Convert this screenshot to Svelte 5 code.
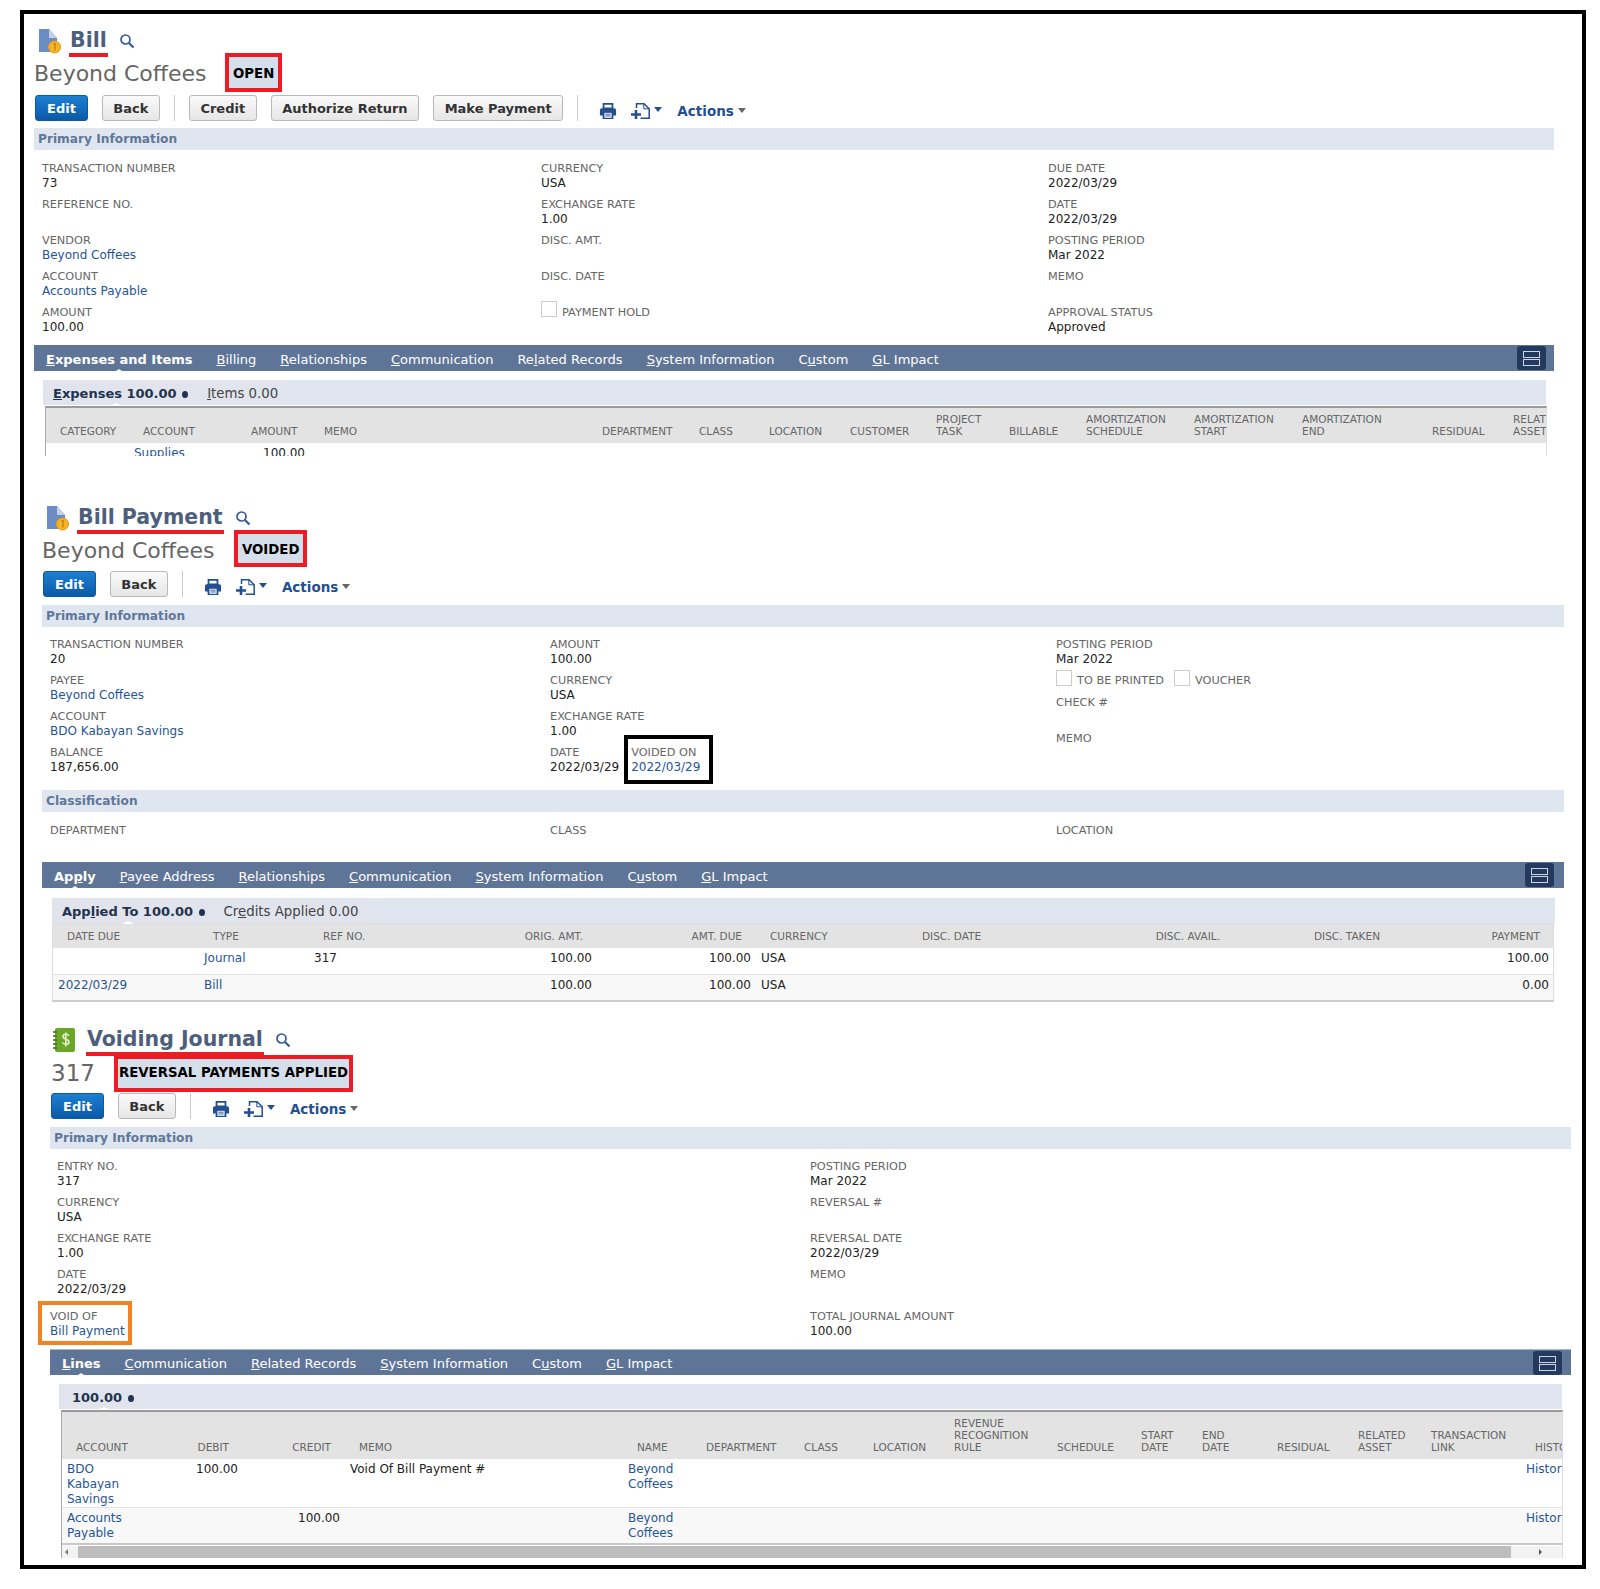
<script lang="ts">
	type Field = { label: string; value?: string; link?: boolean };
	type Tab = { pre: string; key: string; post: string };
	type Col = { label: string; w: number; right?: boolean };
	type Cell = { t: string; link?: boolean } | null;

	const tab = (s: string, i: number): Tab => ({
		pre: s.slice(0, i),
		key: s[i],
		post: s.slice(i + 1)
	});

	const billCols: Field[][] = [
		[
			{ label: 'Transaction Number', value: '73' },
			{ label: 'Reference No.' },
			{ label: 'Vendor', value: 'Beyond Coffees', link: true },
			{ label: 'Account', value: 'Accounts Payable', link: true },
			{ label: 'Amount', value: '100.00' }
		],
		[
			{ label: 'Currency', value: 'USA' },
			{ label: 'Exchange Rate', value: '1.00' },
			{ label: 'Disc. Amt.' },
			{ label: 'Disc. Date' }
		],
		[
			{ label: 'Due Date', value: '2022/03/29' },
			{ label: 'Date', value: '2022/03/29' },
			{ label: 'Posting Period', value: 'Mar 2022' },
			{ label: 'Memo' },
			{ label: 'Approval Status', value: 'Approved' }
		]
	];

	const paymentLeft: Field[] = [
		{ label: 'Transaction Number', value: '20' },
		{ label: 'Payee', value: 'Beyond Coffees', link: true },
		{ label: 'Account', value: 'BDO Kabayan Savings', link: true },
		{ label: 'Balance', value: '187,656.00' }
	];
	const paymentMid: Field[] = [
		{ label: 'Amount', value: '100.00' },
		{ label: 'Currency', value: 'USA' },
		{ label: 'Exchange Rate', value: '1.00' }
	];

	const journalLeft: Field[] = [
		{ label: 'Entry No.', value: '317' },
		{ label: 'Currency', value: 'USA' },
		{ label: 'Exchange Rate', value: '1.00' },
		{ label: 'Date', value: '2022/03/29' }
	];
	const journalRight: Field[] = [
		{ label: 'Posting Period', value: 'Mar 2022' },
		{ label: 'Reversal #' },
		{ label: 'Reversal Date', value: '2022/03/29' },
		{ label: 'Memo' }
	];

	const billTabs = [
		tab('Expenses and Items', 0),
		tab('Billing', 0),
		tab('Relationships', 0),
		tab('Communication', 0),
		tab('Related Records', 2),
		tab('System Information', 0),
		tab('Custom', 1),
		tab('GL Impact', 0)
	];
	const paymentTabs = [
		tab('Apply', 2),
		tab('Payee Address', 0),
		tab('Relationships', 0),
		tab('Communication', 0),
		tab('System Information', 0),
		tab('Custom', 1),
		tab('GL Impact', 0)
	];
	const journalTabs = [
		tab('Lines', 0),
		tab('Communication', 0),
		tab('Related Records', 0),
		tab('System Information', 0),
		tab('Custom', 1),
		tab('GL Impact', 0)
	];

	const billTable: Col[] = [
		{ label: 'Category', w: 83 },
		{ label: 'Account', w: 108 },
		{ label: 'Amount', w: 73 },
		{ label: 'Memo', w: 278 },
		{ label: 'Department', w: 97 },
		{ label: 'Class', w: 70 },
		{ label: 'Location', w: 81 },
		{ label: 'Customer', w: 86 },
		{ label: 'Project\nTask', w: 73 },
		{ label: 'Billable', w: 77 },
		{ label: 'Amortization\nSchedule', w: 108 },
		{ label: 'Amortization\nStart', w: 108 },
		{ label: 'Amortization\nEnd', w: 130 },
		{ label: 'Residual', w: 81 },
		{ label: 'Related\nAsset', w: 80 }
	];
	const billRows: Cell[][] = [
		[null, { t: 'Supplies', link: true }, { t: '100.00' }, null, null, null, null, null, null, null, null, null, null, null, null]
	];

	const paymentTable: Col[] = [
		{ label: 'Date Due', w: 146 },
		{ label: 'Type', w: 110 },
		{ label: 'Ref No.', w: 142 },
		{ label: 'Orig. Amt.', w: 146, right: true },
		{ label: 'Amt. Due', w: 159, right: true },
		{ label: 'Currency', w: 152 },
		{ label: 'Disc. Date', w: 163 },
		{ label: 'Disc. Avail.', w: 163, right: true },
		{ label: 'Disc. Taken', w: 160, right: true },
		{ label: 'Payment', w: 160, right: true }
	];
	const paymentRows: Cell[][] = [
		[null, { t: 'Journal', link: true }, { t: '317' }, { t: '100.00' }, { t: '100.00' }, { t: 'USA' }, null, null, null, { t: '100.00' }],
		[{ t: '2022/03/29', link: true }, { t: 'Bill', link: true }, null, { t: '100.00' }, { t: '100.00' }, { t: 'USA' }, null, null, null, { t: '0.00' }]
	];

	const journalTable: Col[] = [
		{ label: 'Account', w: 73 },
		{ label: 'Debit', w: 108, right: true },
		{ label: 'Credit', w: 102, right: true },
		{ label: 'Memo', w: 278 },
		{ label: 'Name', w: 69 },
		{ label: 'Department', w: 98 },
		{ label: 'Class', w: 69 },
		{ label: 'Location', w: 81 },
		{ label: 'Revenue\nRecognition\nRule', w: 103 },
		{ label: 'Schedule', w: 84 },
		{ label: 'Start\nDate', w: 61 },
		{ label: 'End\nDate', w: 75 },
		{ label: 'Residual', w: 81 },
		{ label: 'Related\nAsset', w: 73 },
		{ label: 'Transaction\nLink', w: 104 },
		{ label: 'History', w: 60 }
	];
	const journalRows: Cell[][] = [
		[
			{ t: 'BDO Kabayan Savings', link: true }, { t: '100.00' }, null, { t: 'Void Of Bill Payment #' },
			{ t: 'Beyond Coffees', link: true }, null, null, null, null, null, null, null, null, null, null,
			{ t: 'History', link: true }
		],
		[
			{ t: 'Accounts Payable', link: true }, null, { t: '100.00' }, null,
			{ t: 'Beyond Coffees', link: true }, null, null, null, null, null, null, null, null, null, null,
			{ t: 'History', link: true }
		]
	];
</script>

{#snippet fieldItem(f: Field)}
	<div class="field">
		<div class="label">{f.label}</div>
		{#if f.value}
			<div class="value" class:link={f.link}>{f.value}</div>
		{/if}
	</div>
{/snippet}

{#snippet docIcon()}
	<svg class="rec-icon" width="26" height="26" viewBox="0 0 26 26">
		<path d="M2 1h10l8 9v14H2z" fill="#6c8cc4" />
		<path d="M12 1l8 9h-8z" fill="#c3d0e8" />
		<circle cx="17.500" cy="19" r="6" fill="#f5b32a" stroke="#e39a14" />
		<path d="M16.500 16.500l1.500-1v7" fill="none" stroke="#b97c0c" stroke-width="1.200" />
	</svg>
{/snippet}

{#snippet searchIcon()}
	<svg class="search" width="16" height="16" viewBox="0 0 16 16">
		<circle cx="6.500" cy="6.500" r="4.500" fill="none" stroke="#2f5a9a" stroke-width="1.700" />
		<path d="M10 10l4.500 4.500" stroke="#2f5a9a" stroke-width="2.200" />
	</svg>
{/snippet}

{#snippet tools()}
	<svg class="print" width="18" height="17" viewBox="0 0 20 19">
		<path d="M5 1h10v5H5z" fill="none" stroke="#234f91" stroke-width="2" />
		<path d="M1 8a2 2 0 0 1 2-2h14a2 2 0 0 1 2 2v6h-3v4H4v-4H1z" fill="#234f91" />
		<path d="M6 11h8v5.500H6z" fill="#fff" />
		<path d="M7 12.500h6M7 14.500h6" stroke="#234f91" />
	</svg>
	<svg class="newdoc" width="20" height="16" viewBox="0 0 20 16">
		<path d="M5.500 5V.8h7.500l5.200 5v9.500H9.500" fill="none" stroke="#234f91" stroke-width="1.500" />
		<path d="M12.800 .8v5h5.400" fill="none" stroke="#234f91" />
		<path d="M5 7v9M0 11.500h10" stroke="#234f91" stroke-width="2.600" />
	</svg>
	<span class="caret dark"></span>
	<span class="actions">Actions</span>
	<span class="caret"></span>
{/snippet}

{#snippet heading(title: string, sub: string, status: string)}
	<div class="title-row">
		{@render docIcon()}
		<h1>{title}</h1>
		{@render searchIcon()}
	</div>
	<div class="sub-row">
		<span class="sub">{sub}</span>
		<span class="status">{status}</span>
	</div>
{/snippet}

{#snippet tabBar(tabs: Tab[])}
	<div class="tabs">
		{#each tabs as t, i}
			<span class="tab" class:active={i === 0}>{t.pre}<u>{t.key}</u>{t.post}</span>
		{/each}
		<span class="layout-btn"><i></i><i></i></span>
	</div>
{/snippet}

{#snippet gridTable(cols: Col[], rows: Cell[][])}
	<table>
		<colgroup>
			{#each cols as c}
				<col style="width: {c.w}px" />
			{/each}
		</colgroup>
		<thead>
			<tr>
				{#each cols as c}
					<th class:right={c.right}>{c.label}</th>
				{/each}
			</tr>
		</thead>
		<tbody>
			{#each rows as row, r}
				<tr class:odd={r % 2 === 1}>
					{#each row as cell, i}
						<td class:right={cols[i].right || (cell && /^[\d.]+$/.test(cell.t) && cols[i].label === 'Amount')} class:link={cell?.link}>
							{cell ? cell.t : ''}
						</td>
					{/each}
				</tr>
			{/each}
		</tbody>
	</table>
{/snippet}

<div class="frame">
	<!-- Bill -->
	<section class="rec rec-bill">
		{@render heading('Bill', 'Beyond Coffees', 'OPEN')}
		<div class="toolbar">
			<button class="primary">Edit</button>
			<button>Back</button>
			<span class="sep"></span>
			<button>Credit</button>
			<button>Authorize Return</button>
			<button>Make Payment</button>
			<span class="sep"></span>
			{@render tools()}
		</div>
		<div class="band">Primary Information</div>
		<div class="fields three">
			<div>
				{#each billCols[0] as f}{@render fieldItem(f)}{/each}
			</div>
			<div>
				{#each billCols[1] as f}{@render fieldItem(f)}{/each}
				<div class="field check-row">
					<span class="check"></span>
					<span class="label">Payment Hold</span>
				</div>
			</div>
			<div>
				{#each billCols[2] as f}{@render fieldItem(f)}{/each}
			</div>
		</div>
		{@render tabBar(billTabs)}
		<div class="subtabs">
			<div class="subtab-group">
				<span class="subtab on"><u>E</u>xpenses 100.00 <b class="dot"></b></span>
				<span class="subtab"><u>I</u>tems 0.00</span>
			</div>
		</div>
		<div class="table-wrap clip boxed two-line">
			{@render gridTable(billTable, billRows)}
		</div>
	</section>

	<!-- Bill Payment -->
	<section class="rec rec-payment">
		{@render heading('Bill Payment', 'Beyond Coffees', 'VOIDED')}
		<div class="toolbar">
			<button class="primary">Edit</button>
			<button>Back</button>
			<span class="sep"></span>
			{@render tools()}
		</div>
		<div class="band">Primary Information</div>
		<div class="fields three">
			<div>
				{#each paymentLeft as f}{@render fieldItem(f)}{/each}
			</div>
			<div>
				{#each paymentMid as f}{@render fieldItem(f)}{/each}
				<div class="date-row">
					{@render fieldItem({ label: 'Date', value: '2022/03/29' })}
					<div class="voided">
						<div class="label">Voided On</div>
						<div class="value link">2022/03/29</div>
					</div>
				</div>
			</div>
			<div>
				{@render fieldItem({ label: 'Posting Period', value: 'Mar 2022' })}
				<div class="print-row">
					<span class="check"></span>
					<span class="label">To Be Printed</span>
					<span class="check second"></span>
					<span class="label">Voucher</span>
				</div>
				{@render fieldItem({ label: 'Check #' })}
				{@render fieldItem({ label: 'Memo' })}
			</div>
		</div>
		<div class="band class-band">Classification</div>
		<div class="fields three class-fields">
			<div>{@render fieldItem({ label: 'Department' })}</div>
			<div>{@render fieldItem({ label: 'Class' })}</div>
			<div>{@render fieldItem({ label: 'Location' })}</div>
		</div>
		{@render tabBar(paymentTabs)}
		<div class="subtabs">
			<div class="subtab-group">
				<span class="subtab on">App<u>l</u>ied To 100.00 <b class="dot"></b></span>
				<span class="subtab">Cr<u>e</u>dits Applied 0.00</span>
			</div>
		</div>
		<div class="table-wrap ruled">
			{@render gridTable(paymentTable, paymentRows)}
		</div>
	</section>

	<!-- Voiding Journal -->
	<section class="rec rec-journal">
		<div class="title-row">
			<svg class="rec-icon book" width="24" height="26" viewBox="0 0 24 26">
				<rect x="2" y="1" width="20" height="24" rx="2" fill="#6aa62a" />
				<path d="M0 5h4M0 9h4M0 13h4M0 17h4M0 21h4" stroke="#3c6a14" stroke-width="1.500" />
				<path d="M16 8.500c-1-1.500-6-2-6 1s6 2.500 6 5.500-5.500 2.500-6.500 .5M12.800 5.500v14" fill="none" stroke="#e4f2cf" stroke-width="1.600" />
			</svg>
			<h1>Voiding Journal</h1>
			{@render searchIcon()}
		</div>
		<div class="sub-row">
			<span class="sub">317</span>
			<span class="status">REVERSAL PAYMENTS APPLIED</span>
		</div>
		<div class="toolbar">
			<button class="primary">Edit</button>
			<button>Back</button>
			<span class="sep"></span>
			{@render tools()}
		</div>
		<div class="band">Primary Information</div>
		<div class="fields two">
			<div>
				{#each journalLeft as f}{@render fieldItem(f)}{/each}
				<div class="void-of">
					<div class="label">Void Of</div>
					<div class="value link">Bill Payment</div>
				</div>
			</div>
			<div>
				{#each journalRight as f}{@render fieldItem(f)}{/each}
				<div class="total">
					{@render fieldItem({ label: 'Total Journal Amount', value: '100.00' })}
				</div>
			</div>
		</div>
		{@render tabBar(journalTabs)}
		<div class="subtabs">
			<div class="subtab-group">
				<span class="subtab on">100.00 <b class="dot"></b></span>
			</div>
		</div>
		<div class="table-wrap boxed three-line">
			{@render gridTable(journalTable, journalRows)}
			<div class="scrollbar">
				<span class="arrow left"></span>
				<span class="thumb"></span>
				<span class="arrow right"></span>
			</div>
		</div>
	</section>
</div>

<style>
	:global(body) {
		margin: 0;
		background: #fff;
		font-family: 'DejaVu Sans', Verdana, sans-serif;
		color: #222;
	}

	.frame {
		box-sizing: border-box;
		width: 1566px;
		margin: 10px 0 0 20px;
		padding: 12px 0 7px;
		border: 4px solid #000;
		box-shadow: 0 1px 0 #999;
		overflow: hidden;
	}

	.rec {
		width: 1520px;
	}
	.rec-bill {
		margin: 1px 0 0 10px;
	}
	.rec-payment {
		width: 1522px;
		margin: 48px 0 0 18px;
	}
	.rec-journal {
		width: 1521px;
		margin: 24px 0 0 26px;
	}

	.title-row {
		display: flex;
		align-items: center;
		height: 28px;
		padding-left: 3px;
	}
	.rec-icon {
		flex: none;
		margin-right: 6px;
	}
	.rec-icon.book {
		margin: 0 9px 0 0;
	}
	h1 {
		height: 24px;
		margin: 0;
		padding: 0 1px 1px;
		border-bottom: 4px solid #ed1c24;
		font-size: 20.500px;
		font-weight: 700;
		line-height: 24px;
		color: #4d5f7c;
		transform: translateY(1px);
	}
	.search {
		margin: 0 0 0 11px;
	}

	.sub-row {
		display: flex;
		align-items: center;
		height: 39px;
	}
	.sub {
		min-width: 191px;
		margin-top: -2px;
		font-size: 22px;
		color: #666;
	}
	.rec-payment .sub {
		min-width: 192px;
	}
	.rec-journal .sub {
		min-width: 63px;
		margin-left: 1px;
		font-size: 23px;
	}
	.status {
		box-sizing: border-box;
		height: 37px;
		padding: 0 4px;
		border: 4px solid #ed1c24;
		background: #d5dfec;
		font-size: 13.300px;
		font-weight: 700;
		line-height: 29px;
		color: #000;
	}
	.rec-bill .status {
		height: 39px;
		margin-top: -4px;
		line-height: 33px;
	}
	.rec-payment .status {
		margin-top: -6px;
		line-height: 31px;
	}
	.rec-journal .status {
		padding: 0 1px;
		line-height: 28px;
	}

	.toolbar {
		display: flex;
		align-items: center;
		gap: 14px;
		height: 26px;
		padding-left: 1px;
	}
	.rec-bill .toolbar {
		margin-top: 1px;
	}
	button {
		box-sizing: border-box;
		height: 26px;
		padding: 0 10.500px;
		border: 1px solid #b9b9b9;
		border-radius: 3px;
		background: linear-gradient(#fafafa, #e6e6e6);
		font: 700 13px 'DejaVu Sans', Verdana, sans-serif;
		color: #333;
	}
	button.primary {
		padding: 0 11px;
		border-color: #0b5aa8;
		background: linear-gradient(#1d7fd0, #0a59a9);
		color: #fff;
	}
	.sep {
		width: 1px;
		height: 26px;
		background: #ccc;
	}
	.print {
		margin: 6px 0 0 7px;
	}
	.newdoc {
		margin: 6px -11px 0 0;
	}
	.caret {
		width: 0;
		height: 0;
		margin: 4px 0 0 -4px;
		border: 4px solid transparent;
		border-top: 5px solid #666;
		border-bottom: 0;
	}
	.caret.dark {
		margin: 2px 1px 0 0;
		border-top-color: #234f91;
	}
	.actions {
		margin: 5px -6px 0 0;
		font-size: 13.500px;
		font-weight: 700;
		color: #234f91;
	}

	.band {
		height: 22px;
		margin-top: 8px;
		padding-left: 4px;
		background: #dfe6f0;
		font-size: 12.200px;
		font-weight: 700;
		line-height: 22px;
		color: #607799;
	}
	.rec-bill .band {
		margin-top: 7px;
	}
	.class-band {
		margin-top: 9px;
	}

	.fields {
		display: grid;
		padding: 10px 0 0 7px;
	}
	.rec-bill .fields {
		padding: 11px 0 0 8px;
	}
	.fields.three {
		grid-template-columns: 500px 506px 1fr;
	}
	.rec-bill .fields.three {
		grid-template-columns: 499px 507px 1fr;
	}
	.fields.two {
		grid-template-columns: 753px 1fr;
	}
	.class-fields {
		padding-top: 11px;
	}
	.rec-payment .fields {
		padding-left: 8px;
	}
	.rec-journal .fields {
		padding-left: 7px;
	}

	.field {
		min-height: 36px;
	}
	.label {
		font-size: 11.300px;
		line-height: 15px;
		text-transform: uppercase;
		color: #666;
	}
	.value {
		font-size: 12px;
		line-height: 15px;
		color: #222;
	}
	.value.link,
	td.link {
		color: #255599;
	}

	.check-row {
		display: flex;
		align-items: flex-start;
		gap: 5px;
	}
	.check {
		flex: none;
		box-sizing: border-box;
		width: 16px;
		height: 16px;
		margin-top: -4px;
		border: 1px solid #ccc;
		background: #fff;
	}
	.print-row {
		display: flex;
		height: 22px;
		gap: 5px;
		margin-top: -6px;
		padding-top: 6px;
	}
	.print-row .check {
		margin-top: -3px;
	}
	.print-row .second {
		margin-left: 5px;
	}
	.date-row {
		display: flex;
	}
	.voided {
		margin: -10px 0 -3px 5px;
		padding: 6px 9px 5px 3px;
		border: 4px solid #000;
	}
	.void-of {
		width: fit-content;
		margin: -2px 0 0 -19px;
		padding: 4px 3px 2px 8px;
		border: 4px solid #f58220;
	}
	.void-of .value {
		white-space: nowrap;
	}
	.total {
		margin-top: 6px;
	}

	.tabs {
		position: relative;
		display: flex;
		align-items: center;
		height: 26px;
		margin-top: 4px;
		background: #5f7597;
		font-size: 13px;
		color: #fff;
	}
	.rec-payment .tabs {
		margin-top: 3px;
	}
	.rec-journal .tabs {
		box-sizing: border-box;
		margin-top: 4px;
		border-top: 1px solid #a9b6c9;
	}
	.tab {
		position: relative;
		padding: 2px 12px 0;
		white-space: nowrap;
	}
	.rec-journal .tab {
		padding-top: 1px;
	}
	.tab.active {
		font-weight: 700;
	}
	.tab.active::after {
		content: '';
		position: absolute;
		left: 50%;
		bottom: -6px;
		margin-left: -6px;
		border: 6px solid transparent;
		border-top: 0;
		border-bottom: 4px solid #fff;
	}
	.layout-btn {
		position: absolute;
		top: 1px;
		right: 8px;
		display: flex;
		flex-direction: column;
		justify-content: center;
		gap: 1px;
		box-sizing: border-box;
		width: 29px;
		height: 24px;
		padding: 0 6px;
		border-radius: 3px;
		background: #24395e;
	}
	.rec-payment .layout-btn {
		right: 10px;
	}
	.rec-journal .layout-btn {
		right: 9px;
	}
	.layout-btn i {
		height: 5px;
		border: 1px solid #cdd5e2;
	}

	.subtabs {
		width: 1503px;
		height: 25px;
		margin: 9px 0 0 9px;
		background: #dfe6f0;
	}
	.rec-payment .subtabs {
		margin: 10px 0 0 10px;
	}
	.subtab-group {
		display: inline-flex;
		align-items: center;
		gap: 19px;
		height: 25px;
		padding: 1px 10px 0;
		box-sizing: border-box;
		background: #e1e4ed;
		font-size: 13.300px;
		color: #444;
	}
	.rec-journal .subtab-group {
		padding-left: 13px;
	}
	.subtab {
		position: relative;
		white-space: nowrap;
	}
	.subtab.on {
		font-size: 13px;
		font-weight: 700;
		color: #23324d;
	}
	.subtab.on::after {
		content: '';
		position: absolute;
		left: 42%;
		bottom: -5px;
		border: 6px solid transparent;
		border-top: 0;
		border-bottom: 3px solid #fff;
	}
	.dot {
		display: inline-block;
		width: 6px;
		height: 7px;
		margin-left: 1px;
		border-radius: 50%;
		background: #23324d;
	}

	.table-wrap {
		width: 1500px;
		margin: 1px 0 0 11px;
		overflow: hidden;
	}
	.rec-payment .table-wrap {
		margin: 0 0 0 10px;
	}
	.boxed {
		border: solid #9a9a9a;
		border-width: 2px 1px 0;
		border-right-color: #ddd;
		border-left-color: #aaa;
	}
	.ruled {
		border: 1px solid #ddd;
		border-bottom: 2px solid #ccc;
	}
	.clip {
		height: 48px;
	}

	table {
		width: 1px;
		table-layout: fixed;
		border-collapse: collapse;
		font-size: 12px;
	}
	th {
		box-sizing: border-box;
		height: 24px;
		padding: 0 7px 0 14px;
		background: #e3e3e3;
		font-size: 10.500px;
		font-weight: 400;
		line-height: 12px;
		text-align: left;
		text-transform: uppercase;
		vertical-align: middle;
		white-space: pre-line;
		color: #666;
		overflow: hidden;
	}
	.two-line th {
		height: 35px;
		padding-bottom: 6px;
		vertical-align: bottom;
	}
	.three-line th {
		height: 47px;
		padding-bottom: 6px;
		vertical-align: bottom;
	}
	th.right {
		padding-left: 0;
		padding-right: 14px;
		text-align: right;
	}
	td {
		padding: 3px 5px 0;
		border-bottom: 1px solid #e2e2e2;
		line-height: 15px;
		vertical-align: top;
		overflow: hidden;
	}
	.ruled td {
		box-sizing: border-box;
		height: 26px;
		padding-top: 3px;
	}
	td.right {
		text-align: right;
	}
	tr.odd td {
		background: #f8f8f8;
	}
	.three-line tr:last-child td {
		padding-bottom: 2px;
		border-bottom: 2px solid #c8c8c8;
	}
	.ruled tr:last-child td {
		border-bottom: 0;
	}

	.scrollbar {
		display: flex;
		align-items: center;
		height: 12px;
		margin-top: 1px;
		background: #f2f2f2;
	}
	.thumb {
		flex: none;
		width: 1433px;
		height: 12px;
		margin: 0 0 0 10px;
		background: #bdbdbd;
	}
	.arrow {
		width: 0;
		height: 0;
		border: 3px solid transparent;
	}
	.arrow.left {
		margin-left: 3px;
		border-left: 0;
		border-right: 3px solid #777;
	}
	.arrow.right {
		margin-left: 28px;
		border-right: 0;
		border-left: 3px solid #555;
	}
</style>
